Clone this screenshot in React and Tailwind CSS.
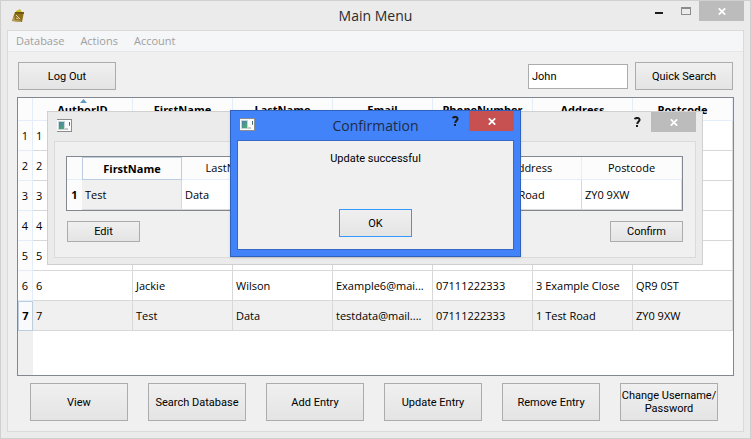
import React from "react";

const COLUMNS = ["AuthorID", "FirstName", "LastName", "Email", "PhoneNumber", "Address", "Postcode"];

const ROWS = [
  ["1", "", "", "", "", "", ""],
  ["2", "", "", "", "", "", ""],
  ["3", "", "", "", "", "", ""],
  ["4", "", "", "", "", "", ""],
  ["5", "", "", "", "", "", ""],
  ["6", "Jackie", "Wilson", "Example6@mai...", "07111222333", "3 Example Close", "QR9 0ST"],
  ["7", "Test", "Data", "testdata@mail....", "07111222333", "1 Test Road", "ZY0 9XW"],
];

const ACTIONS = [
  ["View"],
  ["Search Database"],
  ["Add Entry"],
  ["Update Entry"],
  ["Remove Entry"],
  ["Change Username/", "Password"],
];

function PushButton({ children, className = "", border = "border-[#acacac]" }) {
  return (
    <button
      type="button"
      className={`flex flex-col items-center justify-center border bg-linear-to-b from-[#f0f0f0] to-[#e4e4e4] text-center font-['Roboto','Noto_Sans',sans-serif] leading-[13px] whitespace-nowrap ${border} ${className}`}
    >
      {children}
    </button>
  );
}

function CloseButton({ className }) {
  return (
    <button type="button" aria-label="Close" className={`flex h-5 w-[45px] items-center justify-center ${className}`}>
      <svg width="8" height="7" viewBox="0 0 8 7" aria-hidden="true">
        <path d="M0.8 0.3 L7.2 6.7 M7.2 0.3 L0.8 6.7" stroke="white" strokeWidth="1.7" />
      </svg>
    </button>
  );
}

function HelpButton() {
  return (
    <button type="button" aria-label="Help" className="flex h-5 w-7 items-center justify-center">
      <svg width="7" height="10" viewBox="0 0 7 10" fill="none" aria-hidden="true">
        <path d="M0.8 2.2 C1.3 0.6 5.6 0.2 5.6 2.8 C5.6 4.5 3.3 4.4 3.3 7" stroke="#1c1c1c" strokeWidth="2" />
        <rect x="2" y="8" width="2" height="2" fill="#1c1c1c" />
      </svg>
    </button>
  );
}

function DialogIcon() {
  return (
    <svg width="15" height="13" viewBox="0 0 15 13" className="mt-[7px] shrink-0" aria-hidden="true">
      <defs>
        <linearGradient id="pane" x1="0" y1="0" x2="1" y2="1">
          <stop offset="0" stopColor="#4a7fae" />
          <stop offset="1" stopColor="#4fae6c" />
        </linearGradient>
      </defs>
      <rect x="0" y="0" width="15" height="13" fill="#8b8d90" />
      <rect x="0" y="1" width="14" height="11" fill="#fbfbfb" />
      <rect x="1" y="2" width="7" height="9" fill="#c9d3d8" />
      <rect x="2" y="3" width="5" height="7" fill="url(#pane)" />
      <rect x="8" y="9" width="3" height="2" fill="#c8cacc" />
      <rect x="12" y="3" width="1" height="3" fill="#3e6d8c" />
      <rect x="12" y="6" width="1" height="1" fill="#69a86d" />
    </svg>
  );
}

function BookIcon() {
  return (
    <svg width="13" height="14" viewBox="0 0 13 14" className="mt-2 shrink-0" aria-hidden="true">
      <path d="M4 2 L8 0 L10 3 L4 4 Z" fill="#c9c02c" />
      <path d="M3 3 L12 3 L10 13 L0 12 Z" fill="#91701a" />
      <path d="M3 3 L12 3 L11.5 5 L3 4.5 Z" fill="#6f5310" />
      <path d="M0 12 L2 6 L3 11 L9 11.5 L9 13 Z" fill="#b59c58" />
      <path d="M4 6 L8 10 M4 9 L6.5 10" stroke="#e0d3a6" strokeWidth="1" />
    </svg>
  );
}

function AuthorTable() {
  return (
    <div className="flex flex-1 flex-col border border-[#828790] bg-white">
      <table aria-label="Authors" className="w-full table-fixed border-separate border-spacing-0">
        <thead>
          <tr className="h-[23px] bg-[#fcfcfd]">
            <td className="w-[15px] border-r border-b border-[#e4eefb] p-0" />
            {COLUMNS.map((name) => (
              <th key={name} scope="col" className="relative border-r border-b border-[#e4eefb] px-0 pt-0.5 pb-0 font-bold">
                {name === "AuthorID" && (
                  <svg width="7" height="4" viewBox="0 0 7 4" className="absolute top-px left-1/2 -ml-[3px]" aria-hidden="true">
                    <path d="M0 4 L3.5 0 L7 4 Z" fill="#5f9ac0" />
                  </svg>
                )}
                {name}
              </th>
            ))}
          </tr>
        </thead>
        <tbody>
          {ROWS.map((row) => {
            const current = row[0] === "7";
            return (
              <tr key={row[0]} className={`h-[30px] ${current ? "bg-[#f0f0f0]" : "bg-white"}`}>
                <th
                  scope="row"
                  className={
                    current
                      ? "border border-[#bccde0] bg-[#f8fafd] p-0 font-bold"
                      : "border-r border-b border-[#e4eefb] bg-[#fcfcfd] p-0 font-normal"
                  }
                >
                  {row[0]}
                </th>
                {row.map((cell, i) => (
                  <td key={i} className="truncate border-r border-b border-[#d8d8d8] py-0 pr-0 pl-[3px]">
                    {cell}
                  </td>
                ))}
              </tr>
            );
          })}
        </tbody>
      </table>
      <div className="w-[15px] flex-1 bg-[#f0f0f0]" />
    </div>
  );
}

function UpdateDialog() {
  const record = ROWS[6].slice(1);
  return (
    <section
      aria-label="Update entry"
      className="absolute top-[110px] left-[46px] w-[656px] border border-[#d0d0d0] bg-[#ebebeb] px-1.5 pb-1.5"
    >
      <header className="flex h-[29px] items-start pl-[3px]">
        <DialogIcon />
        <div className="ml-auto flex">
          <HelpButton />
          <CloseButton className="bg-[#bcbcbc]" />
        </div>
      </header>
      <div className="border border-[#dadada] bg-[#f0f0f0] px-[11px] pt-3.5 pb-[15px]">
        <div className="mr-px border border-[#828790]">
          <table aria-label="Updated record" className="w-full table-fixed border-separate border-spacing-0 bg-white">
            <thead>
              <tr className="h-[23px] bg-[#fcfcfd]">
                <td className="w-[15px] border-b border-[#e4eefb] p-0" />
                {COLUMNS.slice(1).map((name, i) => (
                  <th
                    key={name}
                    scope="col"
                    className={
                      i === 0
                        ? "border border-[#bccde0] p-0 font-bold"
                        : "border-r border-b border-[#e4eefb] p-0 font-normal"
                    }
                  >
                    {name}
                  </th>
                ))}
              </tr>
            </thead>
            <tbody>
              <tr className="h-[30px]">
                <th scope="row" className="bg-[#fcfcfd] p-0 font-bold">
                  1
                </th>
                {record.map((cell, i) => (
                  <td
                    key={i}
                    className={`truncate border-r border-b border-[#d8d8d8] py-0 pr-0 pl-[3px] ${i === 0 ? "bg-[#f0f0f0]" : ""}`}
                  >
                    {cell}
                  </td>
                ))}
              </tr>
            </tbody>
          </table>
        </div>
        <div className="mt-2.5 flex justify-between px-px">
          <PushButton className="h-[21px] w-[73px]">Edit</PushButton>
          <PushButton className="h-[21px] w-[73px]">Confirm</PushButton>
        </div>
      </div>
    </section>
  );
}

function ConfirmationDialog() {
  return (
    <section
      role="dialog"
      aria-labelledby="confirmation-title"
      className="absolute top-[109px] left-[229px] w-[291px] border border-[#2f62bd] bg-[#4283fa] px-1.5 pb-1.5 shadow-sm"
    >
      <header className="relative flex h-[29px] items-start pl-[3px]">
        <DialogIcon />
        <h2
          id="confirmation-title"
          className="pointer-events-none absolute inset-x-0 top-0 text-center text-[14px] leading-[29px] text-[#1f2c45]"
        >
          Confirmation
        </h2>
        <div className="ml-auto flex">
          <HelpButton />
          <CloseButton className="bg-[#c75050]" />
        </div>
      </header>
      <div className="flex flex-col items-center border border-[#3569c6] bg-[#f0f0f0] pt-2.5 pb-3">
        <p className="font-['Roboto','Noto_Sans',sans-serif] leading-4">Update successful</p>
        <PushButton border="border-[#3399ff]" className="mt-[42px] h-7 w-[73px]">
          OK
        </PushButton>
      </div>
    </section>
  );
}

export default function App() {
  return (
    <div className="relative flex min-h-screen w-full flex-col border border-[#d0d0d0] bg-[#ebebeb] px-1.5 pb-1.5 font-['Open_Sans','Noto_Sans',sans-serif] text-[11px] leading-4 text-black">
      <header className="relative flex h-[29px] items-start pl-[5px]">
        <BookIcon />
        <h1 className="pointer-events-none absolute inset-x-0 top-0 text-center text-[14px] leading-[29px] text-[#2b2b2b]">
          Main Menu
        </h1>
        <div className="ml-auto flex">
          <button type="button" aria-label="Minimize" className="flex h-5 w-7 items-center justify-center pt-1">
            <span className="h-0.5 w-2 bg-[#1c1c1c]" />
          </button>
          <button type="button" aria-label="Maximize" className="flex h-5 w-[26px] items-center justify-center">
            <span className="h-2 w-2.5 border border-t-2 border-[#8c8c8c]" />
          </button>
          <CloseButton className="bg-[#bcbcbc]" />
        </div>
      </header>

      <main className="flex flex-1 flex-col border border-[#dadada] bg-[#f0f0f0]">
        <nav className="flex h-[21px] items-center gap-4 border-b border-[#e6e7e9] bg-[#f5f6f8] px-2 text-[#a0a0a0]">
          <button type="button">Database</button>
          <button type="button">Actions</button>
          <button type="button">Account</button>
        </nav>

        <div className="flex flex-1 flex-col px-[9px] pt-2.5 pb-2.5">
          <div className="flex items-center px-px">
            <PushButton className="h-7 w-[98px]">Log Out</PushButton>
            <input
              type="text"
              aria-label="Search term"
              defaultValue="John"
              className="ml-auto h-[25px] w-[100px] border border-[#acacac] bg-white px-[3px] font-['Roboto','Noto_Sans',sans-serif]"
            />
            <PushButton className="ml-[7px] h-7 w-[98px]">Quick Search</PushButton>
          </div>

          <div className="mt-[7px] flex flex-1 flex-col">
            <AuthorTable />
          </div>

          <div className="mt-[7px] flex justify-center gap-5 pr-[3px]">
            {ACTIONS.map((lines) => (
              <PushButton key={lines[0]} className="h-[38px] w-[98px]">
                {lines.map((line) => (
                  <span key={line}>{line}</span>
                ))}
              </PushButton>
            ))}
          </div>
        </div>
      </main>

      <UpdateDialog />
      <ConfirmationDialog />
    </div>
  );
}
